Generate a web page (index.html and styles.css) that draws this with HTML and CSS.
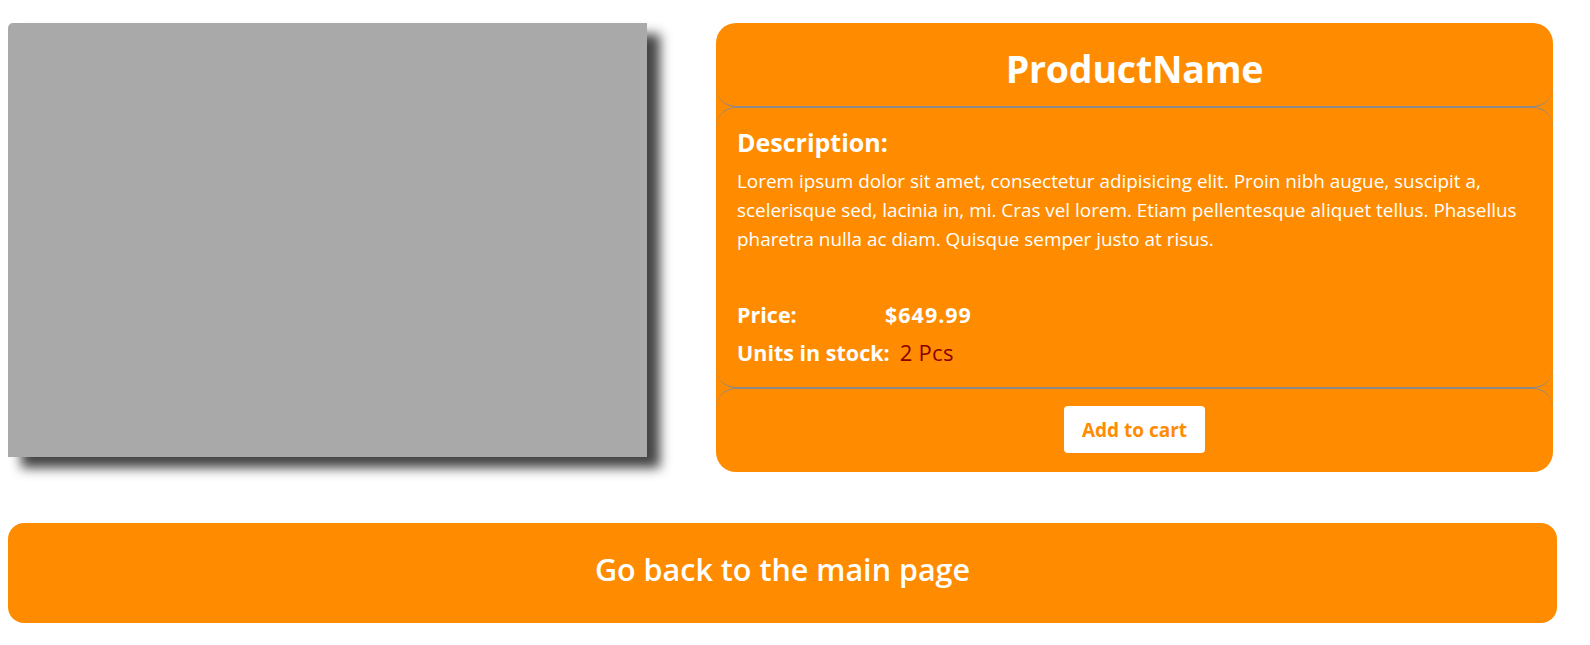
FILE: index.html
```html
<!DOCTYPE html>
<html lang="en">
<head>
<meta charset="utf-8">
<title>Product</title>
<link rel="stylesheet" href="styles.css">
</head>
<body>
<div class="page">
  <div class="product-row">
    <div class="product-image"></div>
    <div class="card">
      <div class="card-header">
        <h1 class="title">ProductName</h1>
      </div>
      <div class="card-body">
        <h2 class="desc-title">Description:</h2>
        <p class="desc-text">Lorem ipsum dolor sit amet, consectetur adipisicing elit. Proin nibh augue, suscipit a, scelerisque sed, lacinia in, mi. Cras vel lorem. Etiam pellentesque aliquet tellus. Phasellus pharetra nulla ac diam. Quisque semper justo at risus.</p>
        <div class="info">
          <div class="info-row"><span class="label label-price">Price:</span><span class="price">$649.99</span></div>
          <div class="info-row"><span class="label label-stock">Units in stock:</span><span class="stock">2 Pcs</span></div>
        </div>
      </div>
      <div class="card-footer">
        <button class="cart-btn">Add to cart</button>
      </div>
    </div>
  </div>
  <button class="back-btn">Go back to the main page</button>
</div>
</body>
</html>
```

FILE: styles.css
```css
* { box-sizing: border-box; }
html, body { margin: 0; padding: 0; background: #fff; }
body {
  font-family: "Open Sans", "Noto Sans", "DejaVu Sans", sans-serif;
  color: #fff;
}
.page {
  width: 1557px;
  padding: 23px 0 0 8px;
}
.product-row {
  display: flex;
  align-items: flex-start;
  gap: 69px;
}
.product-image {
  width: 639px;
  height: 434px;
  flex: none;
  background: #a9a9a9;
  border-top-left-radius: 5px;
  box-shadow: 13px 11px 12px #444;
}
.card {
  width: 837px;
  height: 449px;
  flex: none;
  background: #ff8c00;
  border-radius: 20px;
  display: flex;
  flex-direction: column;
}
.card-header {
  height: 84px;
  border-radius: 20px;
  border-bottom: 1px solid #8a8a8a;
  display: flex;
  align-items: center;
  justify-content: center;
  padding-top: 8px;
}
.title {
  margin: 0;
  font-size: 37.5px;
  font-weight: 700;
  letter-spacing: -0.2px;
}
.card-body {
  flex: 1;
  border-radius: 20px;
  border-top: 1px solid #8a8a8a;
  border-bottom: 1px solid #8a8a8a;
  padding: 18px 21px 0 21px;
}
.desc-title {
  margin: 0 0 9px 0;
  font-size: 25px;
  font-weight: 700;
  line-height: 32px;
}
.desc-text {
  margin: 0 0 47px 0;
  font-size: 18.9px;
  line-height: 28.8px;
}
.info-row {
  display: flex;
  align-items: baseline;
  height: 37px;
  font-size: 21.5px;
  line-height: 30px;
}
.label {
  font-weight: 700;
}
.label-price { width: 148px; }
.label-stock { margin-right: 10px; }
.price {
  font-weight: 700;
  letter-spacing: 1px;
}
.stock {
  color: #8b0000;
  font-size: 22px;
  letter-spacing: 0.3px;
}
.card-footer {
  height: 84px;
  border-radius: 20px;
  border-top: 1px solid #8a8a8a;
  display: flex;
  justify-content: center;
  padding-top: 17px;
}
.cart-btn {
  width: 141px;
  height: 47px;
  background: #fff;
  color: #ff8c00;
  border: none;
  border-radius: 4px;
  font-family: inherit;
  font-size: 19px;
  font-weight: 700;
  padding: 0;
}
.back-btn {
  display: block;
  width: 1549px;
  height: 100px;
  margin-top: 51px;
  background: #ff8c00;
  color: #fff;
  border: none;
  border-radius: 16px;
  font-family: inherit;
  font-size: 30.5px;
  font-weight: 600;
  padding: 0 0 8px 0;
}
```
